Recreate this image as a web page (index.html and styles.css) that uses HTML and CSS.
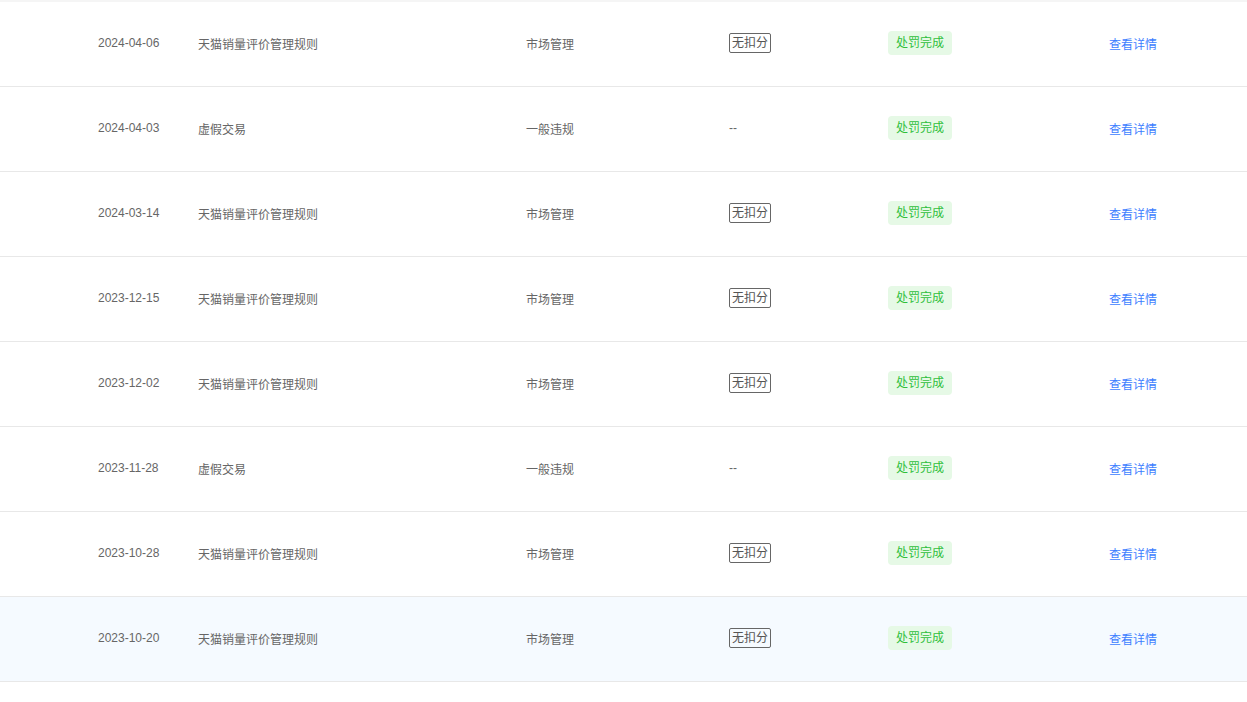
FILE: index.html
```html
<!DOCTYPE html>
<html lang="zh-CN">
<head>
    <meta charset="UTF-8">
    <meta name="viewport" content="width=device-width, initial-scale=1.0">
    <title>违规记录</title>
    <link rel="stylesheet" href="styles.css">
</head>
<body>
    <div class="top-edge"></div>
    <div class="record-list">
        <div class="record-row">
            <span></span>
            <span class="date">2024-04-06</span>
            <span>天猫销量评价管理规则</span>
            <span>市场管理</span>
            <span><em class="score">无扣分</em></span>
            <span><em class="status">处罚完成</em></span>
            <span><a class="detail" href="#">查看详情</a></span>
        </div>
        <div class="record-row">
            <span></span>
            <span class="date">2024-04-03</span>
            <span>虚假交易</span>
            <span>一般违规</span>
            <span>--</span>
            <span><em class="status">处罚完成</em></span>
            <span><a class="detail" href="#">查看详情</a></span>
        </div>
        <div class="record-row">
            <span></span>
            <span class="date">2024-03-14</span>
            <span>天猫销量评价管理规则</span>
            <span>市场管理</span>
            <span><em class="score">无扣分</em></span>
            <span><em class="status">处罚完成</em></span>
            <span><a class="detail" href="#">查看详情</a></span>
        </div>
        <div class="record-row">
            <span></span>
            <span class="date">2023-12-15</span>
            <span>天猫销量评价管理规则</span>
            <span>市场管理</span>
            <span><em class="score">无扣分</em></span>
            <span><em class="status">处罚完成</em></span>
            <span><a class="detail" href="#">查看详情</a></span>
        </div>
        <div class="record-row">
            <span></span>
            <span class="date">2023-12-02</span>
            <span>天猫销量评价管理规则</span>
            <span>市场管理</span>
            <span><em class="score">无扣分</em></span>
            <span><em class="status">处罚完成</em></span>
            <span><a class="detail" href="#">查看详情</a></span>
        </div>
        <div class="record-row">
            <span></span>
            <span class="date">2023-11-28</span>
            <span>虚假交易</span>
            <span>一般违规</span>
            <span>--</span>
            <span><em class="status">处罚完成</em></span>
            <span><a class="detail" href="#">查看详情</a></span>
        </div>
        <div class="record-row">
            <span></span>
            <span class="date">2023-10-28</span>
            <span>天猫销量评价管理规则</span>
            <span>市场管理</span>
            <span><em class="score">无扣分</em></span>
            <span><em class="status">处罚完成</em></span>
            <span><a class="detail" href="#">查看详情</a></span>
        </div>
        <div class="record-row hover">
            <span></span>
            <span class="date">2023-10-20</span>
            <span>天猫销量评价管理规则</span>
            <span>市场管理</span>
            <span><em class="score">无扣分</em></span>
            <span><em class="status">处罚完成</em></span>
            <span><a class="detail" href="#">查看详情</a></span>
        </div>
    </div>
</body>
</html>
```

FILE: styles.css
```css
body {
    margin: 0;
    background-color: #fff;
    font-family: "Liberation Sans", "Noto Sans CJK SC", sans-serif;
    font-size: 12px;
    color: #666;
}
.top-edge {
    height: 2px;
    background-color: #f5f5f5;
}
.record-row {
    display: grid;
    grid-template-columns: 98px 100px 328px 203px 159px 221px 1fr;
    align-items: center;
    height: 82px;
    padding-bottom: 2px;
    border-bottom: 1px solid #e8e8e8;
}
.record-row.hover {
    background-color: #f5faff;
}
.record-row span {
    white-space: nowrap;
}
.score {
    font-style: normal;
    display: inline-block;
    padding: 0 2px;
    line-height: 18px;
    border: 1px solid #666;
    border-radius: 2px;
    color: #555;
}
.status {
    font-style: normal;
    display: inline-block;
    padding: 0 8px;
    line-height: 24px;
    border-radius: 4px;
    background-color: #e6f9e6;
    color: #2fbf3c;
}
.detail {
    color: #3d7eff;
    text-decoration: none;
}
```
